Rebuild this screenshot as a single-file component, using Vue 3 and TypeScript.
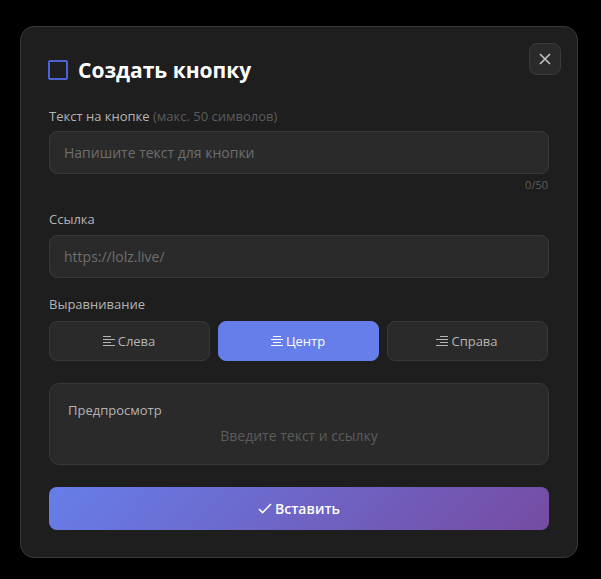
<script setup lang="ts">
import { ref } from 'vue';

const aligns = [
  { key: 'left', label: 'Слева', lines: ['M1 1.5h8', 'M1 4.5h12', 'M1 7.5h8', 'M1 10.5h12'] },
  { key: 'center', label: 'Центр', lines: ['M3 1.5h8', 'M1 4.5h12', 'M3 7.5h8', 'M1 10.5h12'] },
  { key: 'right', label: 'Справа', lines: ['M5 1.5h8', 'M1 4.5h12', 'M5 7.5h8', 'M1 10.5h12'] },
];

const text = ref('');
const link = ref('');
const align = ref('center');
</script>

<template>
  <div class="page">
    <section class="modal">
      <button class="close" type="button" aria-label="Закрыть">
        <svg width="12" height="12" viewBox="0 0 12 12" fill="none" stroke="currentColor" stroke-width="1.6">
          <path d="M1 1l10 10M11 1L1 11" />
        </svg>
      </button>

      <h2 class="title"><span class="title-icon"></span>Создать кнопку</h2>

      <label class="label" for="btn-text">Текст на кнопке <span class="hint">(макс. 50 символов)</span></label>
      <input id="btn-text" v-model="text" class="field" maxlength="50" placeholder="Напишите текст для кнопки" />
      <div class="counter">{{ text.length }}/50</div>

      <label class="label link-label" for="btn-link">Ссылка</label>
      <input id="btn-link" v-model="link" class="field" placeholder="https://lolz.live/" />

      <div class="label align-label">Выравнивание</div>
      <div class="aligns">
        <button
          v-for="item in aligns"
          :key="item.key"
          type="button"
          class="align"
          :class="{ active: align === item.key }"
          @click="align = item.key"
        >
          <svg width="14" height="12" viewBox="0 0 14 12" fill="none" stroke="currentColor" stroke-width="1">
            <path v-for="line in item.lines" :key="line" :d="line" />
          </svg>
          {{ item.label }}
        </button>
      </div>

      <div class="preview">
        <div class="preview-title">Предпросмотр</div>
        <div class="preview-empty">Введите текст и ссылку</div>
      </div>

      <button class="submit" type="button">
        <svg width="14" height="11" viewBox="0 0 14 11" fill="none" stroke="currentColor" stroke-width="1.5">
          <path d="M1 6l3.6 3.6L13 1" />
        </svg>
        Вставить
      </button>
    </section>
  </div>
</template>

<style scoped>
.page {
  padding: 26px 23px 21px 20px;
  font-family: "Open Sans", "Noto Sans", sans-serif;
}

.modal {
  position: relative;
  box-sizing: border-box;
  height: 532px;
  padding: 28px 28px 0;
  background: #1e1e1e;
  border: 1px solid #3a3a3a;
  border-radius: 14px;
}

.close {
  position: absolute;
  top: 16px;
  right: 16px;
  display: flex;
  align-items: center;
  justify-content: center;
  width: 32px;
  height: 32px;
  padding: 0;
  color: #c4c4c4;
  background: #2a2a2a;
  border: 1px solid #3a3a3a;
  border-radius: 8px;
}

.title {
  display: flex;
  align-items: center;
  gap: 10px;
  margin: 0 0 22px -1px;
  color: #fff;
  font-size: 21px;
  font-weight: 700;
  line-height: 30px;
}

.title-icon {
  box-sizing: border-box;
  width: 20px;
  height: 20px;
  border: 2px solid #4a63d8;
  border-radius: 2px;
}

.label {
  display: block;
  margin: 0 0 6px;
  color: #b4b4b4;
  font-size: 13px;
  font-weight: 500;
  line-height: 18px;
}

.hint {
  color: #5c5c5c;
  font-weight: 400;
}

.field {
  display: block;
  box-sizing: border-box;
  width: 100%;
  height: 43px;
  padding: 0 14px;
  color: #e0e0e0;
  background: #2a2a2a;
  border: 1px solid #383838;
  border-radius: 8px;
  outline: none;
  font: inherit;
  font-size: 14px;
}

.field::placeholder {
  color: #6e6e6e;
  opacity: 1;
}

.counter {
  margin: 4px 1px 18px 0;
  color: #5c5c5c;
  font-size: 11px;
  line-height: 14px;
  text-align: right;
}

.link-label {
  margin-bottom: 7px;
}

.align-label {
  margin-top: 17px;
  margin-bottom: 8px;
}

.aligns {
  display: grid;
  grid-template-columns: repeat(3, 161px);
  gap: 8px;
}

.align {
  display: flex;
  align-items: center;
  justify-content: center;
  gap: 2px;
  box-sizing: border-box;
  height: 40px;
  padding: 0 2px 0 0;
  color: #b4b4b4;
  background: #2a2a2a;
  border: 1px solid #383838;
  border-radius: 8px;
  font: inherit;
  font-size: 13px;
}

.align.active {
  color: #fff;
  background: #667eea;
  border-color: #667eea;
  font-weight: 500;
}

.preview {
  box-sizing: border-box;
  height: 82px;
  margin-top: 22px;
  padding: 17px 18px 0;
  background: #2a2a2a;
  border: 1px solid #383838;
  border-radius: 10px;
}

.preview-title {
  color: #b4b4b4;
  font-size: 13px;
  font-weight: 500;
  line-height: 18px;
}

.preview-empty {
  margin-top: 7px;
  color: #5c5c5c;
  font-size: 14px;
  line-height: 20px;
  text-align: center;
}

.submit {
  display: flex;
  align-items: center;
  justify-content: center;
  gap: 3px;
  box-sizing: border-box;
  width: 100%;
  height: 43px;
  margin-top: 22px;
  padding: 0;
  color: #fff;
  background: linear-gradient(135deg, #667eea 0%, #764ba2 100%);
  border: 0;
  border-radius: 8px;
  font: inherit;
  font-size: 14px;
  font-weight: 600;
}
</style>

<style>
html,
body {
  margin: 0;
  background: #000;
}
</style>
